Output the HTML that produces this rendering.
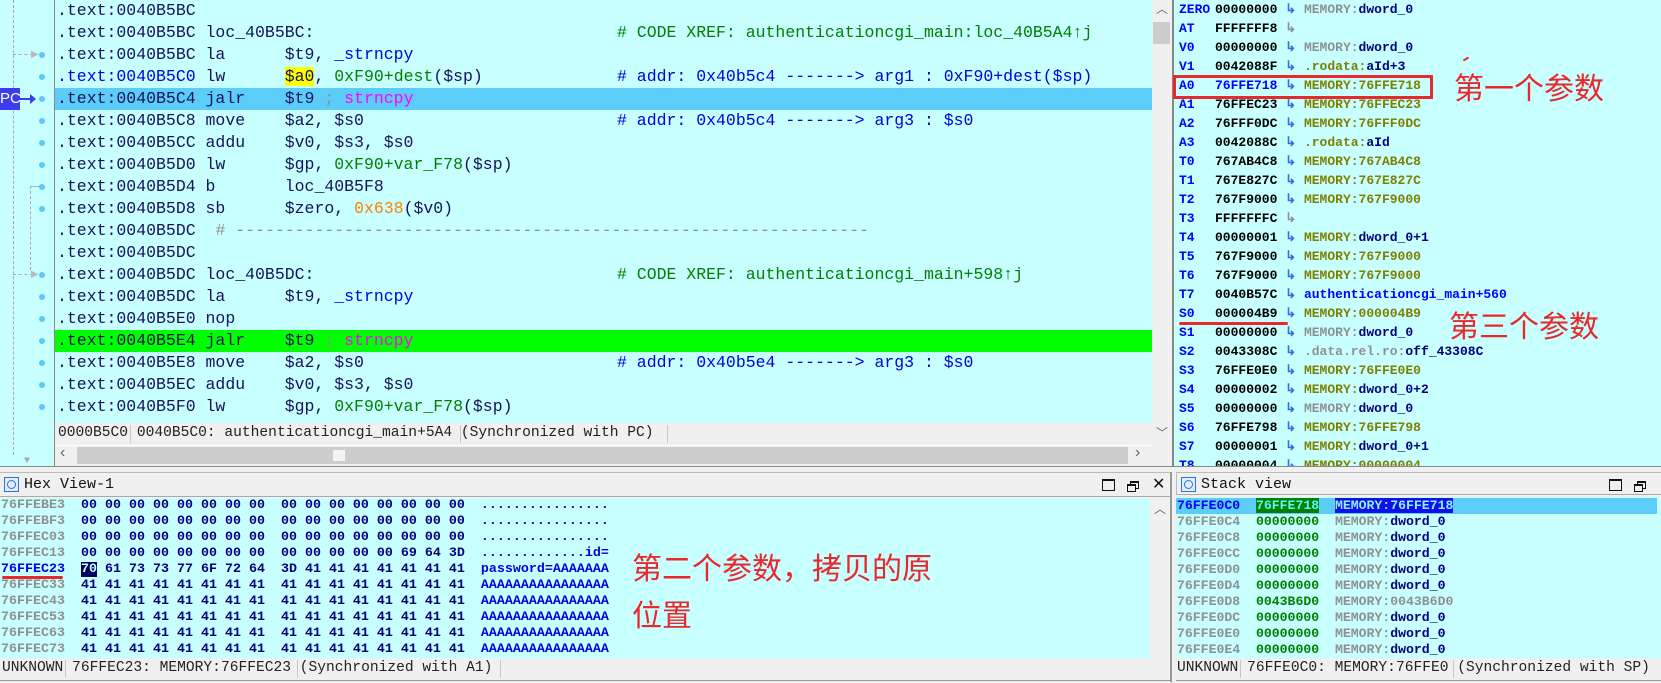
<!DOCTYPE html>
<html><head><meta charset="utf-8">
<style>
*{margin:0;padding:0;box-sizing:border-box}
body{width:1661px;height:683px;background:#f0f0f0;position:relative;overflow:hidden;font-family:"Liberation Mono",monospace}
.a{position:absolute}
.cy{background:#c8ffff}
.r{position:absolute;left:55px;width:1097px;height:22px;line-height:22px;padding-left:2px;font-size:16.5px;white-space:pre;color:#14145a}
.cm{position:absolute;left:562px;top:0}
.g{color:#008000}.b{color:#0000e0}.o{color:#ff8000}.m{color:#ff00ff}.gr{color:#909090}.n{color:#000080}.ol{color:#808000}
.dot{position:absolute;left:39px;width:6px;height:6px;border-radius:3px;background:#5bc8f8}
.rg{position:absolute;left:1179px;height:19px;line-height:19px;font-size:13px;font-weight:bold;white-space:pre;color:#000}
.rg .nm{color:#0000ff;display:inline-block;width:36px}
.rg .ar{color:#3070e0}
.hx{position:absolute;left:1px;height:16px;line-height:16px;font-size:13.33px;font-weight:bold;white-space:pre;color:#000080}
.sk{position:absolute;left:1177px;height:16px;line-height:16px;font-size:13.17px;font-weight:bold;white-space:pre}
.st{position:absolute;font-size:14.6px;white-space:pre;color:#222;line-height:21px;font-family:"Liberation Mono",monospace}
.sep{position:absolute;width:1px;background:#c8c8c8}
.zh{font-family:"Liberation Sans","Noto Sans CJK SC",sans-serif;color:#e8282a;font-size:30px;position:absolute;white-space:nowrap;line-height:34px}
</style></head><body>

<div class="a cy" style="left:0;top:0;width:1152px;height:423px"></div>
<div class="a" style="left:54px;top:0;width:1px;height:466px;background:#888"></div>
<div class="a cy" style="left:0;top:423px;width:54px;height:43px"></div>
<div class="a" style="left:13px;top:0;height:455px;border-left:1px dashed #aaa"></div>
<div class="a" style="left:30px;top:186px;height:84px;border-left:1px dashed #aaa"></div>
<div class="a" style="left:30px;top:186px;width:10px;border-top:1px dashed #aaa"></div>
<div class="a" style="left:13px;top:54px;width:20px;border-top:1px dashed #aaa"></div>
<div class="a" style="left:13px;top:274px;width:20px;border-top:1px dashed #aaa"></div>
<div class="a" style="left:31px;top:49px;color:#bbb;font-size:10px">▶</div>
<div class="a" style="left:31px;top:269px;color:#bbb;font-size:10px">▶</div>
<div class="a" style="left:24px;top:456px;color:#aaa;font-size:10px">▼</div>
<div class="dot" style="top:52px"></div><div class="dot" style="top:74px"></div><div class="dot" style="top:96px"></div>
<div class="dot" style="top:118px"></div><div class="dot" style="top:140px"></div><div class="dot" style="top:162px"></div>
<div class="dot" style="top:184px"></div><div class="dot" style="top:206px"></div>
<div class="dot" style="top:272px"></div><div class="dot" style="top:294px"></div><div class="dot" style="top:316px"></div>
<div class="dot" style="top:338px"></div><div class="dot" style="top:360px"></div><div class="dot" style="top:382px"></div><div class="dot" style="top:404px"></div>
<div class="a" style="left:0;top:88px;width:20px;height:22px;background:#3c3cf0;color:#fff;font:15px 'Liberation Sans',sans-serif;line-height:22px;text-align:center">PC</div>
<div class="a" style="left:20px;top:98px;width:12px;height:2px;background:#3c3cf0"></div>
<div class="a" style="left:30px;top:94px;width:0;height:0;border-left:6px solid #3c3cf0;border-top:5px solid transparent;border-bottom:5px solid transparent"></div>

<div class="r" style="top:0">.text:0040B5BC</div>
<div class="r" style="top:22px">.text:0040B5BC loc_40B5BC:<span class="cm g"># CODE XREF: authenticationcgi_main:loc_40B5A4<b style="font-weight:normal">↑</b>j</span></div>
<div class="r" style="top:44px">.text:0040B5BC la      $t9, <span class="b">_strncpy</span></div>
<div class="r" style="top:66px"><span class="b">.text:0040B5C0</span> lw      <span style="background:#ffff00">$a0</span>, <span class="g">0xF90+dest</span>($sp)<span class="cm b"># addr: 0x40b5c4 -------&gt; arg1 : 0xF90+dest($sp)</span></div>
<div class="r" style="top:88px;background:#5ccdf9">.text:0040B5C4 jalr    $t9 <span class="gr">;</span> <span class="m">strncpy</span></div>
<div class="r" style="top:110px">.text:0040B5C8 move    $a2, $s0<span class="cm b"># addr: 0x40b5c4 -------&gt; arg3 : $s0</span></div>
<div class="r" style="top:132px">.text:0040B5CC addu    $v0, $s3, $s0</div>
<div class="r" style="top:154px">.text:0040B5D0 lw      $gp, <span class="g">0xF90+var_F78</span>($sp)</div>
<div class="r" style="top:176px">.text:0040B5D4 b       loc_40B5F8</div>
<div class="r" style="top:198px">.text:0040B5D8 sb      $zero, <span class="o">0x638</span>($v0)</div>
<div class="r" style="top:220px">.text:0040B5DC  <span class="gr"># ----------------------------------------------------------------</span></div>
<div class="r" style="top:242px">.text:0040B5DC</div>
<div class="r" style="top:264px">.text:0040B5DC loc_40B5DC:<span class="cm g"># CODE XREF: authenticationcgi_main+598<b style="font-weight:normal">↑</b>j</span></div>
<div class="r" style="top:286px">.text:0040B5DC la      $t9, <span class="b">_strncpy</span></div>
<div class="r" style="top:308px">.text:0040B5E0 nop</div>
<div class="r" style="top:330px;background:#00ff00">.text:0040B5E4 jalr    $t9 <span class="gr">;</span> <span class="m">strncpy</span></div>
<div class="r" style="top:352px">.text:0040B5E8 move    $a2, $s0<span class="cm b"># addr: 0x40b5e4 -------&gt; arg3 : $s0</span></div>
<div class="r" style="top:374px">.text:0040B5EC addu    $v0, $s3, $s0</div>
<div class="r" style="top:396px;height:27px">.text:0040B5F0 lw      $gp, <span class="g">0xF90+var_F78</span>($sp)</div>

<div class="st" style="left:58px;top:423px">0000B5C0 0040B5C0: authenticationcgi_main+5A4 (Synchronized with PC)</div>
<div class="sep" style="left:130px;top:425px;height:18px"></div>
<div class="sep" style="left:460px;top:425px;height:18px"></div>
<div class="sep" style="left:667px;top:425px;height:18px"></div>
<div class="a" style="left:55px;top:445px;width:1097px;height:1px;background:#fff"></div>
<div class="a" style="left:77px;top:447px;width:1051px;height:17px;background:#cdcdcd"></div>
<div class="a" style="left:333px;top:450px;width:12px;height:11px;background:#f4f4f4"></div>
<div class="a" style="left:60px;top:444px;color:#666;font:16px 'Liberation Sans'">‹</div>
<div class="a" style="left:1135px;top:444px;color:#666;font:16px 'Liberation Sans'">›</div>
<div class="a" style="left:1152px;top:0;width:19px;height:445px;background:#f0f0f0"></div>
<div class="a" style="left:1153px;top:22px;width:17px;height:22px;background:#cdcdcd"></div>
<div class="a" style="left:1156px;top:0;color:#666;font:12px 'Liberation Sans'">︿</div>
<div class="a" style="left:1156px;top:424px;color:#666;font:12px 'Liberation Sans'">﹀</div>
<div class="a" style="left:1172px;top:0;width:2px;height:466px;background:#888"></div>
<div class="a" style="left:0;top:466px;width:1174px;height:1px;background:#888"></div>

<div class="a cy" style="left:1174px;top:0;width:1487px;height:466px"></div>
<div class="a" style="left:1174px;top:466px;width:487px;height:1px;background:#888"></div>
<div class="rg" style="top:0"><span class="nm">ZERO</span>00000000 <span class="ar">↳</span> <span class="gr">MEMORY:</span><span class="n">dword_0</span></div>
<div class="rg" style="top:19px"><span class="nm">AT</span>FFFFFFF8 <span class="gr">↳</span></div>
<div class="rg" style="top:38px"><span class="nm">V0</span>00000000 <span class="ar">↳</span> <span class="gr">MEMORY:</span><span class="n">dword_0</span></div>
<div class="rg" style="top:57px"><span class="nm">V1</span>0042088F <span class="ar">↳</span> <span class="ol">.rodata:</span><span class="n">aId+3</span></div>
<div class="rg" style="top:76px"><span class="nm">A0</span><span style="color:#0000ff">76FFE718</span> <span class="ar">↳</span> <span class="ol">MEMORY:76FFE718</span></div>
<div class="rg" style="top:95px"><span class="nm">A1</span>76FFEC23 <span class="ar">↳</span> <span class="ol">MEMORY:76FFEC23</span></div>
<div class="rg" style="top:114px"><span class="nm">A2</span>76FFF0DC <span class="ar">↳</span> <span class="ol">MEMORY:76FFF0DC</span></div>
<div class="rg" style="top:133px"><span class="nm">A3</span>0042088C <span class="ar">↳</span> <span class="ol">.rodata:</span><span class="n">aId</span></div>
<div class="rg" style="top:152px"><span class="nm">T0</span>767AB4C8 <span class="ar">↳</span> <span class="ol">MEMORY:767AB4C8</span></div>
<div class="rg" style="top:171px"><span class="nm">T1</span>767E827C <span class="ar">↳</span> <span class="ol">MEMORY:767E827C</span></div>
<div class="rg" style="top:190px"><span class="nm">T2</span>767F9000 <span class="ar">↳</span> <span class="ol">MEMORY:767F9000</span></div>
<div class="rg" style="top:209px"><span class="nm">T3</span>FFFFFFFC <span class="gr">↳</span></div>
<div class="rg" style="top:228px"><span class="nm">T4</span>00000001 <span class="ar">↳</span> <span class="ol">MEMORY:</span><span class="n">dword_0+1</span></div>
<div class="rg" style="top:247px"><span class="nm">T5</span>767F9000 <span class="ar">↳</span> <span class="ol">MEMORY:767F9000</span></div>
<div class="rg" style="top:266px"><span class="nm">T6</span>767F9000 <span class="ar">↳</span> <span class="ol">MEMORY:767F9000</span></div>
<div class="rg" style="top:285px"><span class="nm">T7</span>0040B57C <span class="ar">↳</span> <span style="color:#0000ff">authenticationcgi_main+560</span></div>
<div class="rg" style="top:304px"><span class="nm">S0</span>000004B9 <span class="ar">↳</span> <span class="ol">MEMORY:000004B9</span></div>
<div class="rg" style="top:323px"><span class="nm">S1</span>00000000 <span class="ar">↳</span> <span class="gr">MEMORY:</span><span class="n">dword_0</span></div>
<div class="rg" style="top:342px"><span class="nm">S2</span>0043308C <span class="ar">↳</span> <span class="gr">.data.rel.ro:</span><span class="n">off_43308C</span></div>
<div class="rg" style="top:361px"><span class="nm">S3</span>76FFE0E0 <span class="ar">↳</span> <span class="ol">MEMORY:76FFE0E0</span></div>
<div class="rg" style="top:380px"><span class="nm">S4</span>00000002 <span class="ar">↳</span> <span class="ol">MEMORY:</span><span class="n">dword_0+2</span></div>
<div class="rg" style="top:399px"><span class="nm">S5</span>00000000 <span class="ar">↳</span> <span class="gr">MEMORY:</span><span class="n">dword_0</span></div>
<div class="rg" style="top:418px"><span class="nm">S6</span>76FFE798 <span class="ar">↳</span> <span class="ol">MEMORY:76FFE798</span></div>
<div class="rg" style="top:437px"><span class="nm">S7</span>00000001 <span class="ar">↳</span> <span class="ol">MEMORY:</span><span class="n">dword_0+1</span></div>
<div class="rg" style="top:456px;height:10px;overflow:hidden"><span class="nm">T8</span>00000004 <span class="ar">↳</span> <span class="ol">MEMORY:00000004</span></div>
<div class="a" style="left:1173px;top:75px;width:260px;height:24px;border:3px solid #e8282a"></div>
<div class="a" style="left:1179px;top:322px;width:109px;height:3px;background:#e8282a;border-radius:2px"></div>
<div class="zh" style="left:1454px;top:73px">第一个参数</div>
<div class="zh" style="left:1449px;top:311px">第三个参数</div>
<div class="a" style="left:1463px;top:58px;width:6px;height:2px;background:#e8282a;transform:rotate(-30deg)"></div>

<div class="a" style="left:0;top:472px;width:1172px;height:25px;background:#f0f0f0;border-top:1px solid #bbb;border-bottom:1px solid #aaa"></div>
<div class="a" style="left:4px;top:477px;width:15px;height:15px;border:1px solid #3070e0;background:#dfefff"><div style="margin:2px;width:9px;height:9px;border:1px solid #3070e0;border-radius:5px"></div></div>
<div class="a" style="left:24px;top:474px;font-size:15px;line-height:22px;color:#111">Hex View-1</div>
<div class="a" style="left:1102px;top:479px;width:13px;height:12px;border:1px solid #111;border-top-width:2px"></div>
<div class="a" style="left:1130px;top:481px;width:9px;height:8px;border:1px solid #111;border-top-width:2px;background:#f0f0f0"></div>
<div class="a" style="left:1127px;top:484px;width:9px;height:8px;border:1px solid #111;border-top-width:2px;background:#f0f0f0"></div>
<div class="a" style="left:1152px;top:474px;font:16px 'Liberation Sans';color:#111">✕</div>
<div class="a cy" style="left:0;top:498px;width:1150px;height:160px"></div>
<div class="a" style="left:1150px;top:498px;width:20px;height:181px;background:#f0f0f0"></div>
<div class="a" style="left:1154px;top:500px;color:#666;font:12px 'Liberation Sans'">︿</div>
<div class="a" style="left:1170px;top:472px;width:2px;height:210px;background:#999"></div>
<div class="hx" style="top:498px"><span class="gr">76FFEBE3</span>  00 00 00 00 00 00 00 00  00 00 00 00 00 00 00 00  <span class="b">................</span></div>
<div class="hx" style="top:514px"><span class="gr">76FFEBF3</span>  00 00 00 00 00 00 00 00  00 00 00 00 00 00 00 00  <span class="b">................</span></div>
<div class="hx" style="top:530px"><span class="gr">76FFEC03</span>  00 00 00 00 00 00 00 00  00 00 00 00 00 00 00 00  <span class="b">................</span></div>
<div class="hx" style="top:546px"><span class="gr">76FFEC13</span>  00 00 00 00 00 00 00 00  00 00 00 00 00 69 64 3D  <span class="b">.............id=</span></div>
<div class="hx" style="top:562px"><span class="b">76FFEC23</span>  <span style="background:#000060;color:#c8ffff">70</span> 61 73 73 77 6F 72 64  3D 41 41 41 41 41 41 41  <span class="b">password=AAAAAAA</span></div>
<div class="hx" style="top:578px"><span class="gr">76FFEC33</span>  41 41 41 41 41 41 41 41  41 41 41 41 41 41 41 41  <span class="b">AAAAAAAAAAAAAAAA</span></div>
<div class="hx" style="top:594px"><span class="gr">76FFEC43</span>  41 41 41 41 41 41 41 41  41 41 41 41 41 41 41 41  <span class="b">AAAAAAAAAAAAAAAA</span></div>
<div class="hx" style="top:610px"><span class="gr">76FFEC53</span>  41 41 41 41 41 41 41 41  41 41 41 41 41 41 41 41  <span class="b">AAAAAAAAAAAAAAAA</span></div>
<div class="hx" style="top:626px"><span class="gr">76FFEC63</span>  41 41 41 41 41 41 41 41  41 41 41 41 41 41 41 41  <span class="b">AAAAAAAAAAAAAAAA</span></div>
<div class="hx" style="top:642px"><span class="gr">76FFEC73</span>  41 41 41 41 41 41 41 41  41 41 41 41 41 41 41 41  <span class="b">AAAAAAAAAAAAAAAA</span></div>
<div class="a" style="left:2px;top:576px;width:61px;height:3px;background:#e8282a;border-radius:2px"></div>
<div class="zh" style="left:632px;top:553px">第二个参数，拷贝的原</div>
<div class="zh" style="left:632px;top:600px">位置</div>
<div class="st" style="left:2px;top:658px">UNKNOWN 76FFEC23: MEMORY:76FFEC23 (Synchronized with A1)</div>
<div class="sep" style="left:65px;top:660px;height:18px"></div>
<div class="sep" style="left:297px;top:660px;height:18px"></div>
<div class="sep" style="left:500px;top:660px;height:18px"></div>
<div class="a" style="left:0;top:680px;width:1172px;height:1px;background:#999"></div>

<div class="a" style="left:1176px;top:472px;width:485px;height:23px;background:#f0f0f0;border-top:1px solid #bbb;border-bottom:1px solid #aaa;border-left:1px solid #bbb"></div>
<div class="a" style="left:1181px;top:477px;width:15px;height:15px;border:1px solid #3070e0;background:#dfefff"><div style="margin:2px;width:9px;height:9px;border:1px solid #3070e0;border-radius:5px"></div></div>
<div class="a" style="left:1201px;top:474px;font-size:15px;line-height:22px;color:#111">Stack view</div>
<div class="a" style="left:1609px;top:479px;width:13px;height:12px;border:1px solid #111;border-top-width:2px"></div>
<div class="a" style="left:1637px;top:481px;width:9px;height:8px;border:1px solid #111;border-top-width:2px;background:#f0f0f0"></div>
<div class="a" style="left:1634px;top:484px;width:9px;height:8px;border:1px solid #111;border-top-width:2px;background:#f0f0f0"></div>
<div class="a cy" style="left:1176px;top:497px;width:485px;height:161px"></div>
<div class="a" style="left:1176px;top:498px;width:481px;height:16px;background:#5ccdf9"></div>
<div class="sk" style="top:498px"><span style="color:#0000ff">76FFE0C0</span>  <span style="background:#008000;color:#5cf5f9">76FFE718</span>  <span style="background:#1010e8;color:#8ff0ff">MEMORY:76FFE718</span></div>
<div class="sk" style="top:514px"><span class="gr">76FFE0C4</span>  <span class="g">00000000</span>  <span class="gr">MEMORY:</span><span class="n">dword_0</span></div>
<div class="sk" style="top:530px"><span class="gr">76FFE0C8</span>  <span class="g">00000000</span>  <span class="gr">MEMORY:</span><span class="n">dword_0</span></div>
<div class="sk" style="top:546px"><span class="gr">76FFE0CC</span>  <span class="g">00000000</span>  <span class="gr">MEMORY:</span><span class="n">dword_0</span></div>
<div class="sk" style="top:562px"><span class="gr">76FFE0D0</span>  <span class="g">00000000</span>  <span class="gr">MEMORY:</span><span class="n">dword_0</span></div>
<div class="sk" style="top:578px"><span class="gr">76FFE0D4</span>  <span class="g">00000000</span>  <span class="gr">MEMORY:</span><span class="n">dword_0</span></div>
<div class="sk" style="top:594px"><span class="gr">76FFE0D8</span>  <span class="g">0043B6D0</span>  <span class="gr">MEMORY:0043B6D0</span></div>
<div class="sk" style="top:610px"><span class="gr">76FFE0DC</span>  <span class="g">00000000</span>  <span class="gr">MEMORY:</span><span class="n">dword_0</span></div>
<div class="sk" style="top:626px"><span class="gr">76FFE0E0</span>  <span class="g">00000000</span>  <span class="gr">MEMORY:</span><span class="n">dword_0</span></div>
<div class="sk" style="top:642px"><span class="gr">76FFE0E4</span>  <span class="g">00000000</span>  <span class="gr">MEMORY:</span><span class="n">dword_0</span></div>
<div class="st" style="left:1177px;top:658px">UNKNOWN 76FFE0C0: MEMORY:76FFE0 (Synchronized with SP)</div>
<div class="sep" style="left:1240px;top:660px;height:18px"></div>
<div class="sep" style="left:1453px;top:660px;height:18px"></div>
<div class="a" style="left:1176px;top:680px;width:485px;height:1px;background:#999"></div>
</body></html>
